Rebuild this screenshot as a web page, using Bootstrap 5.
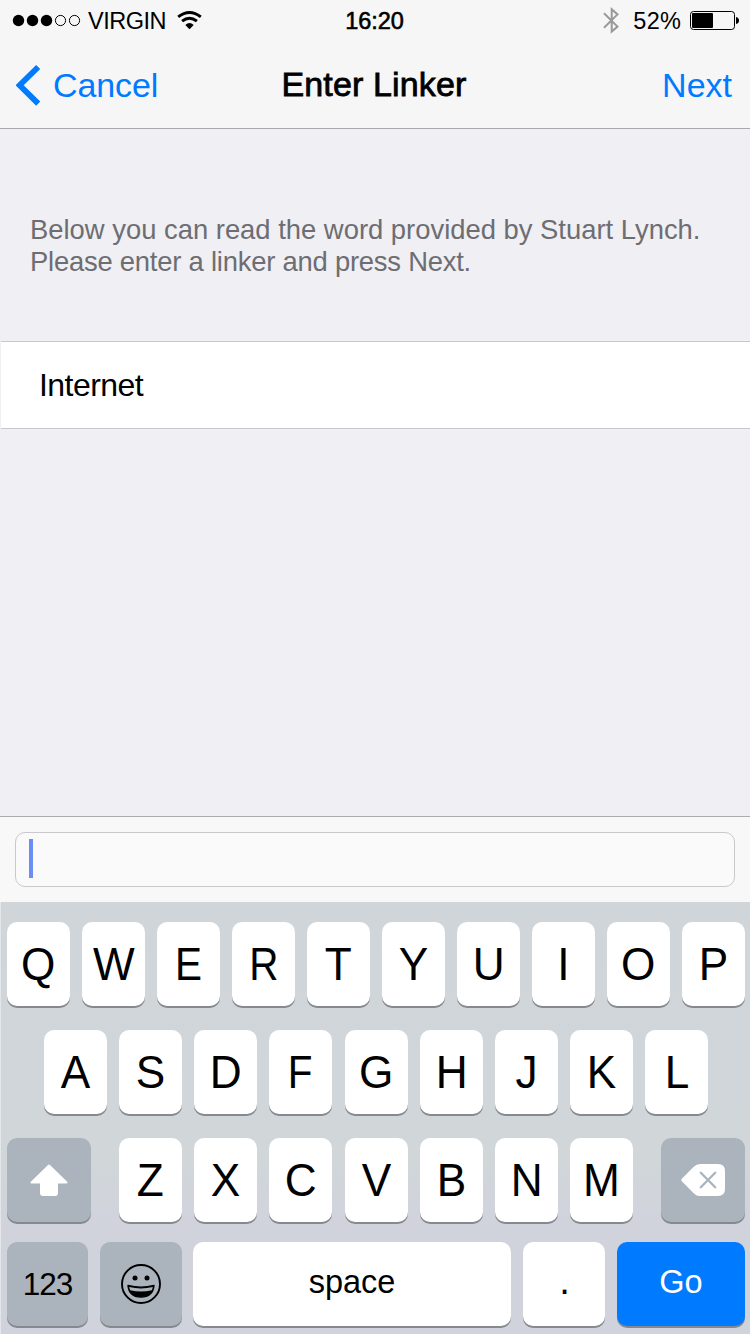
<!DOCTYPE html>
<html lang="en">
<head>
<meta charset="utf-8">
<meta name="viewport" content="width=device-width, initial-scale=1">
<title>Enter Linker</title>
<link href="https://cdn.jsdelivr.net/npm/bootstrap@5.3.0/dist/css/bootstrap.min.css" rel="stylesheet">
<style>
  body { font-family: "Liberation Sans", Arial, sans-serif; color: #000; background: #efeff4; height: 1334px; overflow: hidden; }
  svg { display: block; flex: none; }
  .ios-blue { color: #007aff; }
  .top-area { height: 129px; background: #f6f6f6; border-bottom: 1px solid #a9a9ac; }
  .status-bar { height: 40px; line-height: 42px; font-size: 23.5px; padding: 0 11px 0 12px; }
  .carrier { letter-spacing: -.5px; margin-left: 7px; }
  .wifi { margin-left: 11px; }
  .percent { margin: 0 8px 0 13px; letter-spacing: .2px; }
  .clock { -webkit-text-stroke: .6px #000; letter-spacing: -.1px; margin-right: 2px; }
  .side { flex: 1 1 0; }
  .nav-row { height: 88px; line-height: 88px; font-size: 34px; padding: 0 18px 0 16px; }
  .nav-row a { text-decoration: none; padding-top: 1px; }
  .back-label { margin-left: 11px; letter-spacing: -.1px; }
  .title-text { font-size: 34px; line-height: 88px; font-weight: 400; letter-spacing: .15px; -webkit-text-stroke: .8px #000; }
  .intro { padding: 84.5px 0 0 30px; height: 212px; font-size: 27.4px; line-height: 32px; color: #6d6d72; }
  .intro-tight { letter-spacing: -.22px; }
  .word-row { height: 88px; margin-left: 1px; padding: 0 38px; border: solid #c8c7cc; border-width: 1px 0; font-size: 32px; letter-spacing: -.55px; line-height: 86px; color: #000; }
  .entry-bar { height: 86px; padding: 15px; background: #f8f8f8; border-top: 1px solid #acacac; }
  .entry { height: 55px; border: 1px solid #c8c8cd; border-radius: 10px; background: #fafafa; padding: 6px 13px; }
  .caret { width: 4px; height: 39px; background: #6d8df6; }
  .keyboard { height: 432px; padding: 20px 5px 0 6px; border-left: 1px solid #e4e7ea; background: linear-gradient(#d0d5d9 0, #d1d6d9 60%, #d0d3dc 75%, #d0d3dc 100%); }
  .key { border: 0; padding: 0; width: 63px; height: 84px; border-radius: 10px; background: #fff; box-shadow: 0 2px 0 #868a8e; color: #000; font-size: 46.5px; line-height: 84px; flex: none; display: flex; align-items: center; justify-content: center; }
  .key span { display: block; transform: scaleX(.95); }
  .key .slim { transform: scaleX(.87); }
  .key-row { gap: 12px; margin-bottom: 24px; }
  .second { padding-left: 37px; }
  .third { margin-bottom: 20px; }
  .nudge { margin-left: 1px; }
  .dark-key { background: #abb3bd; }
  .shift-key, .del-key { width: 84px; }
  .shift-key { margin-right: 16px; }
  .del-key { margin-left: 16px; }
  .num-key { width: 81px; font-size: 31.5px; letter-spacing: -1px; }
  .emoji-key, .dot-key { width: 82px; }
  .space-key { width: 318px; margin-left: -1px; font-size: 32.5px; }
  .go-key { width: 128px; background: #007aff; color: #fff; font-size: 32.5px; }
  .num-key span, .space-key span, .go-key span { transform: none; }
  .space-key, .go-key { padding-bottom: 4px; }
  .dot-key { font-size: 40px; padding-bottom: 9px; padding-left: 1px; }
</style>
</head>
<body class="d-flex flex-column">
<header class="top-area flex-shrink-0">
  <div class="status-bar d-flex align-items-start">
    <div class="side d-flex">
      <svg width="69" height="40" viewBox="0 0 69 40"><g fill="#000"><circle cx="6.5" cy="20.5" r="5.7"/><circle cx="20.5" cy="20.5" r="5.7"/><circle cx="34.5" cy="20.5" r="5.7"/></g><g fill="none" stroke="#000" stroke-width="1"><circle cx="48.5" cy="20.5" r="5.1"/><circle cx="62.5" cy="20.5" r="5.1"/></g></svg>
      <span class="carrier">VIRGIN</span>
      <svg class="wifi" width="26" height="40" viewBox="0 0 26 40"><g fill="none" stroke="#000" stroke-width="2.9"><path d="M1.2 16.8Q12.5 8 23.8 16.8"/><path d="M5.1 21.2Q12.5 15.2 19.9 21.2"/></g><path d="M8.3 25.1Q12.5 20.8 16.7 25.1L12.5 29.2Z"/></svg>
    </div>
    <div class="clock">16:20</div>
    <div class="side d-flex justify-content-end">
      <svg width="18" height="40" viewBox="0 0 18 40"><path d="M2 13.2L15.5 26.6L9.7 31.6V9.2L15.5 14.4L2 27.8" fill="none" stroke="#999" stroke-width="2"/></svg>
      <span class="percent">52%</span>
      <svg width="50" height="40" viewBox="0 0 50 40"><rect x="1.5" y="11.5" width="44" height="18" rx="3" fill="none" stroke="#000" stroke-width="1"/><rect x="3" y="13" width="21" height="15" rx="1"/><path d="M47 17Q50 17.5 50 20.5T47 24Z"/></svg>
    </div>
  </div>
  <nav class="nav-row d-flex align-items-start">
    <div class="side"><a class="ios-blue d-flex" href="#"><svg width="26" height="84" viewBox="0 0 26 84"><path d="M22.2 26L3.6 44.3L22.2 62.6" fill="none" stroke="#007aff" stroke-width="5.8"/></svg><span class="back-label">Cancel</span></a></div>
    <h1 class="title-text mb-0">Enter Linker</h1>
    <div class="side d-flex justify-content-end"><a class="ios-blue" href="#">Next</a></div>
  </nav>
</header>
<main class="flex-grow-1">
  <p class="intro mb-0">Below you can read the word provided by Stuart Lynch.<br><span class="intro-tight">Please enter a linker and press Next.</span></p>
  <div class="list-group"><div class="list-group-item rounded-0 word-row">Internet</div></div>
</main>
<div class="entry-bar flex-shrink-0"><div class="entry"><div class="caret"></div></div></div>
<section class="keyboard flex-shrink-0">
  <div class="key-row d-flex">
    <button class="key"><span>Q</span></button><button class="key"><span>W</span></button><button class="key"><span class="slim">E</span></button><button class="key"><span class="slim">R</span></button><button class="key"><span>T</span></button><button class="key"><span>Y</span></button><button class="key"><span>U</span></button><button class="key"><span>I</span></button><button class="key"><span>O</span></button><button class="key"><span>P</span></button>
  </div>
  <div class="key-row second d-flex">
    <button class="key"><span>A</span></button><button class="key"><span>S</span></button><button class="key"><span>D</span></button><button class="key"><span class="slim">F</span></button><button class="key nudge"><span>G</span></button><button class="key"><span>H</span></button><button class="key"><span>J</span></button><button class="key"><span>K</span></button><button class="key"><span>L</span></button>
  </div>
  <div class="key-row third d-flex">
    <button class="key dark-key shift-key" aria-label="Shift"><svg width="84" height="84" viewBox="0 0 84 84"><path d="M42 27.5L59.5 44.5H50V55Q50 57 48 57H36Q34 57 34 55V44.5H24.5Z" fill="#fff" stroke="#fff" stroke-width="2" stroke-linejoin="round"/></svg></button>
    <button class="key"><span>Z</span></button><button class="key"><span>X</span></button><button class="key"><span>C</span></button><button class="key nudge"><span>V</span></button><button class="key"><span>B</span></button><button class="key"><span>N</span></button><button class="key"><span>M</span></button>
    <button class="key dark-key del-key" aria-label="Delete"><svg width="84" height="84" viewBox="0 0 84 84"><path d="M20.8 40.8L33 28.5Q35.5 26 39 26H57Q64 26 64 33V51Q64 58 57 58H39Q35.5 58 33 55.5L20.8 43.2Q19.6 42 20.8 40.8Z" fill="#fff"/><path d="M39.8 34.8L54.2 49.2M54.2 34.8L39.8 49.2" stroke="#abb3bd" stroke-width="2.3" stroke-linecap="round"/></svg></button>
  </div>
  <div class="key-row d-flex mb-0">
    <button class="key dark-key num-key"><span>123</span></button>
    <button class="key dark-key emoji-key" aria-label="Emoji"><svg width="82" height="84" viewBox="0 0 82 84"><circle cx="41" cy="42" r="19" fill="none" stroke="#000" stroke-width="1.9"/><circle cx="35" cy="36" r="2.5"/><circle cx="47" cy="36" r="2.5"/><path d="M28 43.5Q41 46.8 54 43.5Q53 55 41 55Q29 55 28 43.5Z" stroke="#000" stroke-width="1.4" stroke-linejoin="round"/><path d="M29.2 45Q41 47.8 52.8 45Q52.5 46.7 51.8 48.2Q41 51 30.2 48.2Q29.5 46.7 29.2 45Z" fill="#abb3bd"/></svg></button>
    <button class="key space-key"><span>space</span></button>
    <button class="key dot-key"><span>.</span></button>
    <button class="key go-key"><span>Go</span></button>
  </div>
</section>
<script src="https://cdn.jsdelivr.net/npm/bootstrap@5.3.0/dist/js/bootstrap.bundle.min.js"></script>
</body>
</html>
